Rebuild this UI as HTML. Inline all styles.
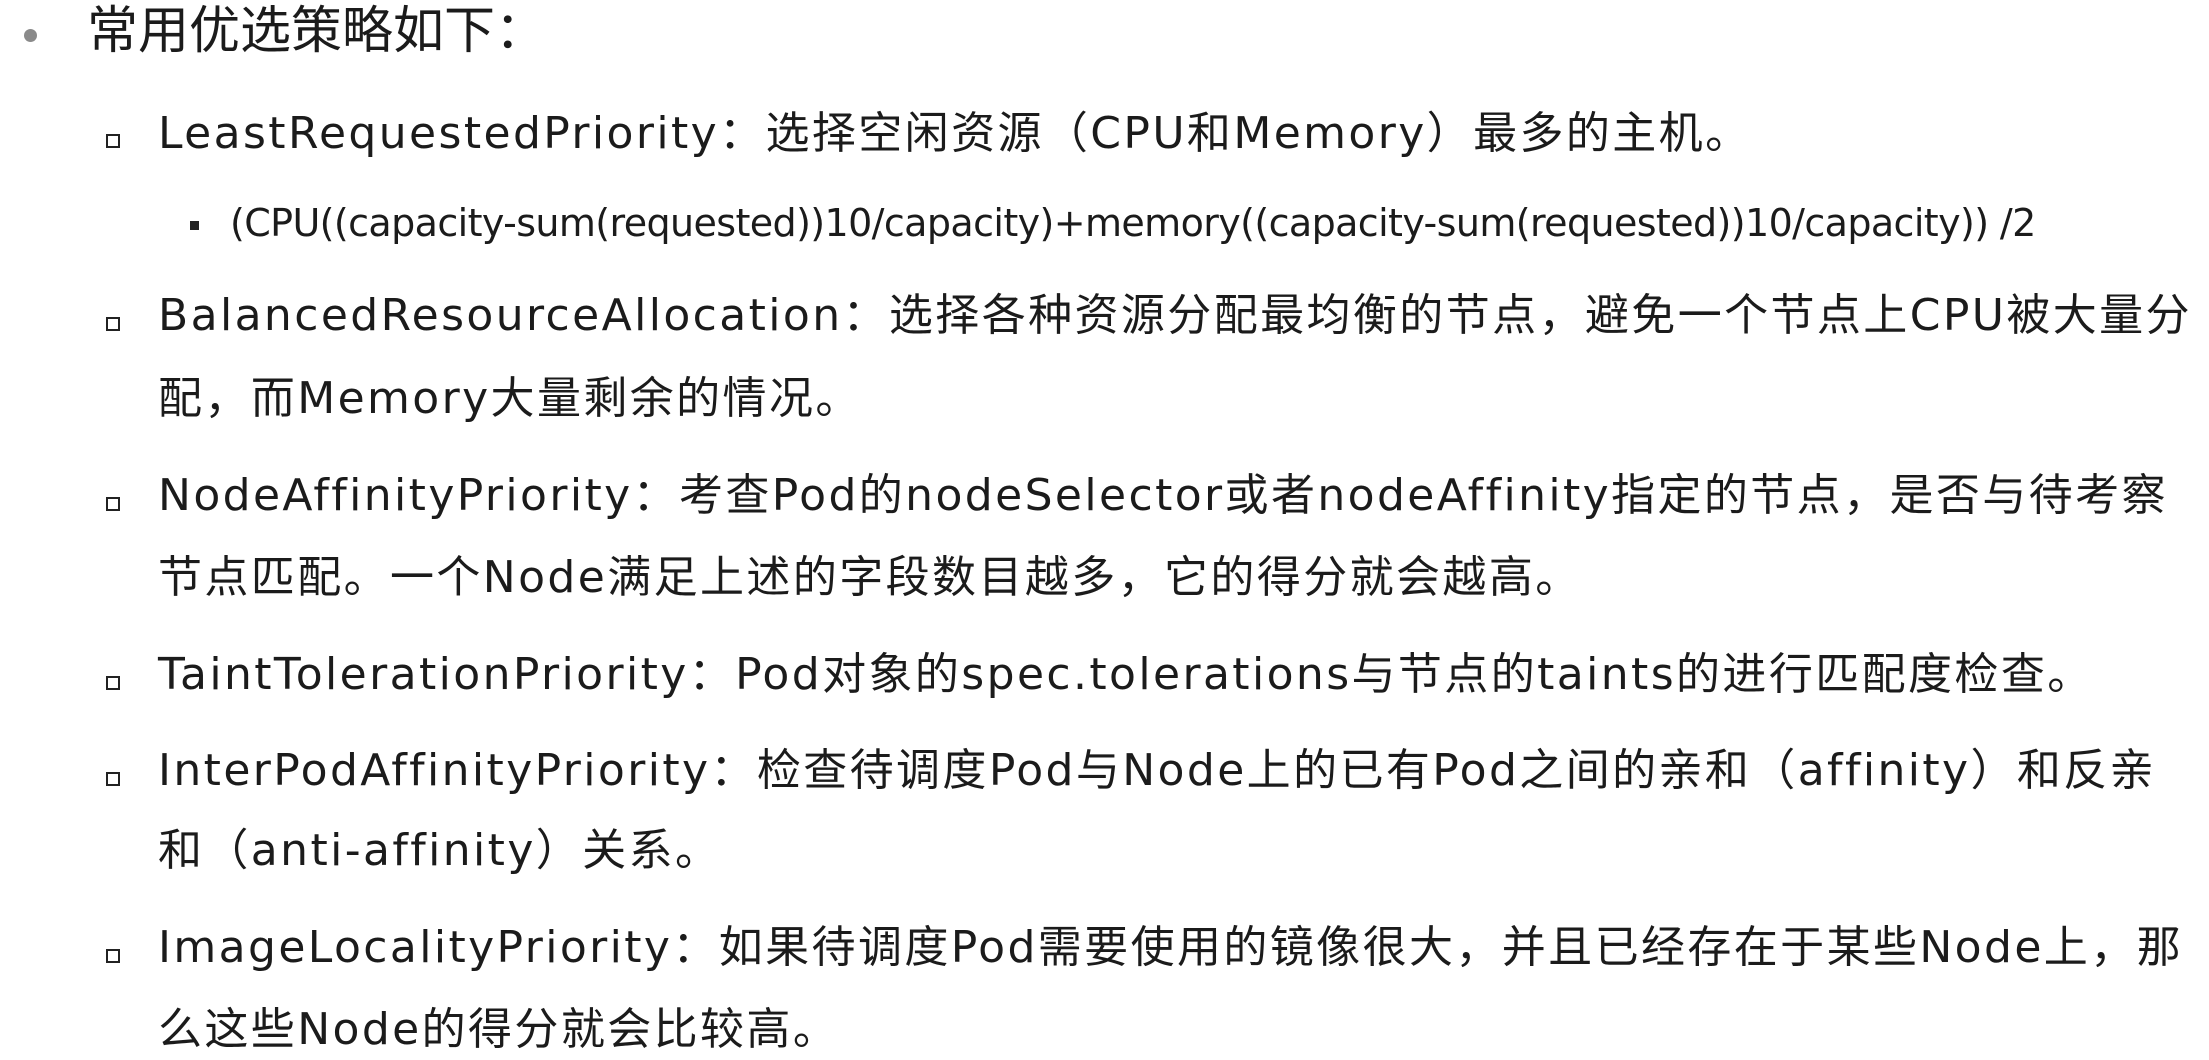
<!DOCTYPE html>
<html><head><meta charset="utf-8"><style>
html,body{margin:0;padding:0;background:#fff;}
body{width:2209px;height:1058px;position:relative;overflow:hidden;font-family:"DejaVu Sans","Noto Sans CJK SC",sans-serif;color:#1b1b1b;}
.l{position:absolute;white-space:nowrap;height:60px;line-height:60px;font-size:44px;letter-spacing:2.4px;}
.t{font-size:51px;letter-spacing:0;font-family:"Liberation Sans","Noto Sans CJK SC",sans-serif;}
.f{font-size:38px;letter-spacing:-0.6px;}
.sq{position:absolute;width:10px;height:10px;border:2px solid #222;box-sizing:content-box;}
.dot{position:absolute;width:13px;height:13px;border-radius:50%;background:#8a8a8a;}
.fs{position:absolute;width:9px;height:9px;background:#222;}
</style></head><body>
<div class="dot" style="left:24px;top:29px"></div>
<div class="l t" style="left:87px;top:1px">常用优选策略如下：</div>

<div class="sq" style="left:106px;top:134px"></div>
<div class="l" style="left:158px;top:104px">LeastRequestedPriority：选择空闲资源（CPU和Memory）最多的主机。</div>

<div class="fs" style="left:190px;top:221px"></div>
<div class="l f" style="left:230px;top:193px">(CPU((capacity-sum(requested))10/capacity)+memory((capacity-sum(requested))10/capacity)) /2</div>

<div class="sq" style="left:106px;top:317px"></div>
<div class="l" style="left:158px;top:286px">BalancedResourceAllocation：选择各种资源分配最均衡的节点，避免一个节点上CPU被大量分</div>
<div class="l" style="left:158px;top:369px">配，而Memory大量剩余的情况。</div>

<div class="sq" style="left:106px;top:497px"></div>
<div class="l" style="left:158px;top:466px">NodeAffinityPriority：考查Pod的nodeSelector或者nodeAffinity指定的节点，是否与待考察</div>
<div class="l" style="left:158px;top:548px">节点匹配。一个Node满足上述的字段数目越多，它的得分就会越高。</div>

<div class="sq" style="left:106px;top:676px"></div>
<div class="l" style="left:158px;top:645px">TaintTolerationPriority：Pod对象的spec.tolerations与节点的taints的进行匹配度检查。</div>

<div class="sq" style="left:106px;top:772px"></div>
<div class="l" style="left:158px;top:741px">InterPodAffinityPriority：检查待调度Pod与Node上的已有Pod之间的亲和（affinity）和反亲</div>
<div class="l" style="left:158px;top:821px">和（anti-affinity）关系。</div>

<div class="sq" style="left:106px;top:949px"></div>
<div class="l" style="left:158px;top:918px">ImageLocalityPriority：如果待调度Pod需要使用的镜像很大，并且已经存在于某些Node上，那</div>
<div class="l" style="left:158px;top:1000px">么这些Node的得分就会比较高。</div>
</body></html>
